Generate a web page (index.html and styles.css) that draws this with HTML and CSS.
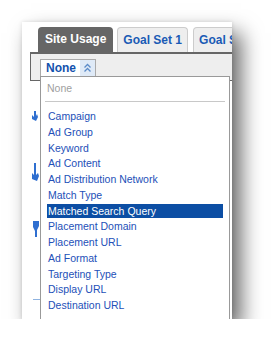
FILE: index.html
```html
<!DOCTYPE html>
<html lang="en">
<head>
    <meta charset="UTF-8">
    <meta name="viewport" content="width=device-width, initial-scale=1.0">
    <title>Dimension menu</title>
    <link rel="stylesheet" href="styles.css">
</head>
<body>
    <div class="shot">
        <div class="tabs">
            <div class="tab active">Site Usage</div>
            <div class="tab">Goal Set 1</div>
            <div class="tab">Goal Set 2</div>
        </div>

        <div class="panel">
            <div class="dropdown">
                <div class="picker">
                    <span class="picker-label">None</span>
                    <span class="picker-arrow">
                        <svg width="15" height="16" viewBox="0 0 15 16">
                            <path d="M4.5 7.5 L7.5 4.5 L10.5 7.5" fill="none" stroke="#5b8bc8" stroke-width="1.3"/>
                            <path d="M4.5 11.5 L7.5 8.5 L10.5 11.5" fill="none" stroke="#5b8bc8" stroke-width="1.3"/>
                        </svg>
                    </span>
                </div>
                <div class="menu">
                    <div class="menu-none">None</div>
                    <div class="menu-sep"></div>
                    <div class="item">Campaign</div>
                    <div class="item">Ad Group</div>
                    <div class="item">Keyword</div>
                    <div class="item">Ad Content</div>
                    <div class="item">Ad Distribution Network</div>
                    <div class="item">Match Type</div>
                    <div class="item selected">Matched Search Query</div>
                    <div class="item">Placement Domain</div>
                    <div class="item">Placement URL</div>
                    <div class="item">Ad Format</div>
                    <div class="item">Targeting Type</div>
                    <div class="item">Display URL</div>
                    <div class="item">Destination URL</div>
                </div>
            </div>
        </div>

        <div class="content">
            <!-- bits of the report that peek out from under the menu -->
            <svg class="peek" width="18" height="238" viewBox="0 0 18 238">
                <path d="M12 30 L12 36 L10 34 L10 38 L14 40 L16 36 L15 33 L14 35 L14 30 Z" fill="#2f6fd0"/>
                <path d="M12 82 L12 94 L10 92 L10 98 L15 100 L17 95 L16 92 L14 94 L14 82 Z" fill="#2f6fd0"/>
                <path d="M11 140 L11 146 L13 150 L13 156 L15 156 L15 149 L17 145 L17 140 Z" fill="#2f6fd0"/>
                <rect x="11" y="218" width="7" height="1" fill="#8fb3e0"/>
            </svg>
        </div>
    </div>
</body>
</html>
```

FILE: styles.css
```css
body {
    margin: 0;
    background-color: #fff;
    font-family: 'Liberation Sans', Arial, sans-serif;
}

.shot {
    position: relative;
    width: 210px;
    height: 297px;
    margin: 22px 0 0 22px;
    overflow: hidden;
    background-color: #fff;
    box-shadow: 9px 11px 20px rgba(0, 0, 0, 0.6), 0 0 4px rgba(0, 0, 0, 0.12);
}

.tabs {
    display: flex;
    padding: 5px 0 0 16px;
}

.tab {
    flex-shrink: 0;
    box-sizing: border-box;
    height: 25px;
    padding: 0 5px;
    margin-right: 5px;
    font-size: 12px;
    font-weight: bold;
    line-height: 24px;
    color: #1a5bb5;
    background-color: #eee;
    border: 1px solid #ccc;
    border-bottom: none;
    border-radius: 4px 4px 0 0;
    white-space: nowrap;
}

.tab.active {
    padding: 0 7px;
    margin-right: 4px;
    color: #fff;
    background-color: #666;
    border: none;
    line-height: 25px;
}

.panel {
    position: relative;
    height: 26px;
    margin-left: 8px;
    background-color: #eee;
    border-top: 2px solid #666;
    border-left: 1px solid #666;
    border-bottom: 1px solid #666;
}

/* menu that drops over the report */
.dropdown {
    position: absolute;
    left: 9px;
    top: 5px;
    z-index: 2;
}

.picker {
    display: flex;
    box-sizing: border-box;
    width: 56px;
    height: 17px;
    background-color: #fff;
    border: 1px solid #aaa;
    border-bottom: none;
}

.picker-label {
    flex: 1;
    padding-left: 5px;
    font-size: 12px;
    font-weight: bold;
    line-height: 17px;
    color: #1352ad;
}

.picker-arrow {
    width: 15px;
    height: 16px;
    background-color: #dfeaf7;
}

.picker-arrow svg {
    display: block;
}

.menu {
    box-sizing: border-box;
    width: 190px;
    height: 260px;
    padding-top: 4px;
    background-color: #fff;
    border: 1px solid #999;
    font-size: 10.5px;
}

.menu-none {
    padding-left: 6px;
    line-height: 14px;
    color: #a0a0a0;
}

.menu-sep {
    height: 1px;
    margin: 6px 4px 7px;
    background-color: #c8c8c8;
}

.item {
    height: 14px;
    margin: 0 6px 1.75px;
    padding-left: 1px;
    line-height: 14px;
    color: #2350b8;
    white-space: nowrap;
}

.item.selected {
    color: #fff;
    background-color: #0c4ea4;
}

.content {
    display: flex;
}

.peek {
    display: block;
}
```
